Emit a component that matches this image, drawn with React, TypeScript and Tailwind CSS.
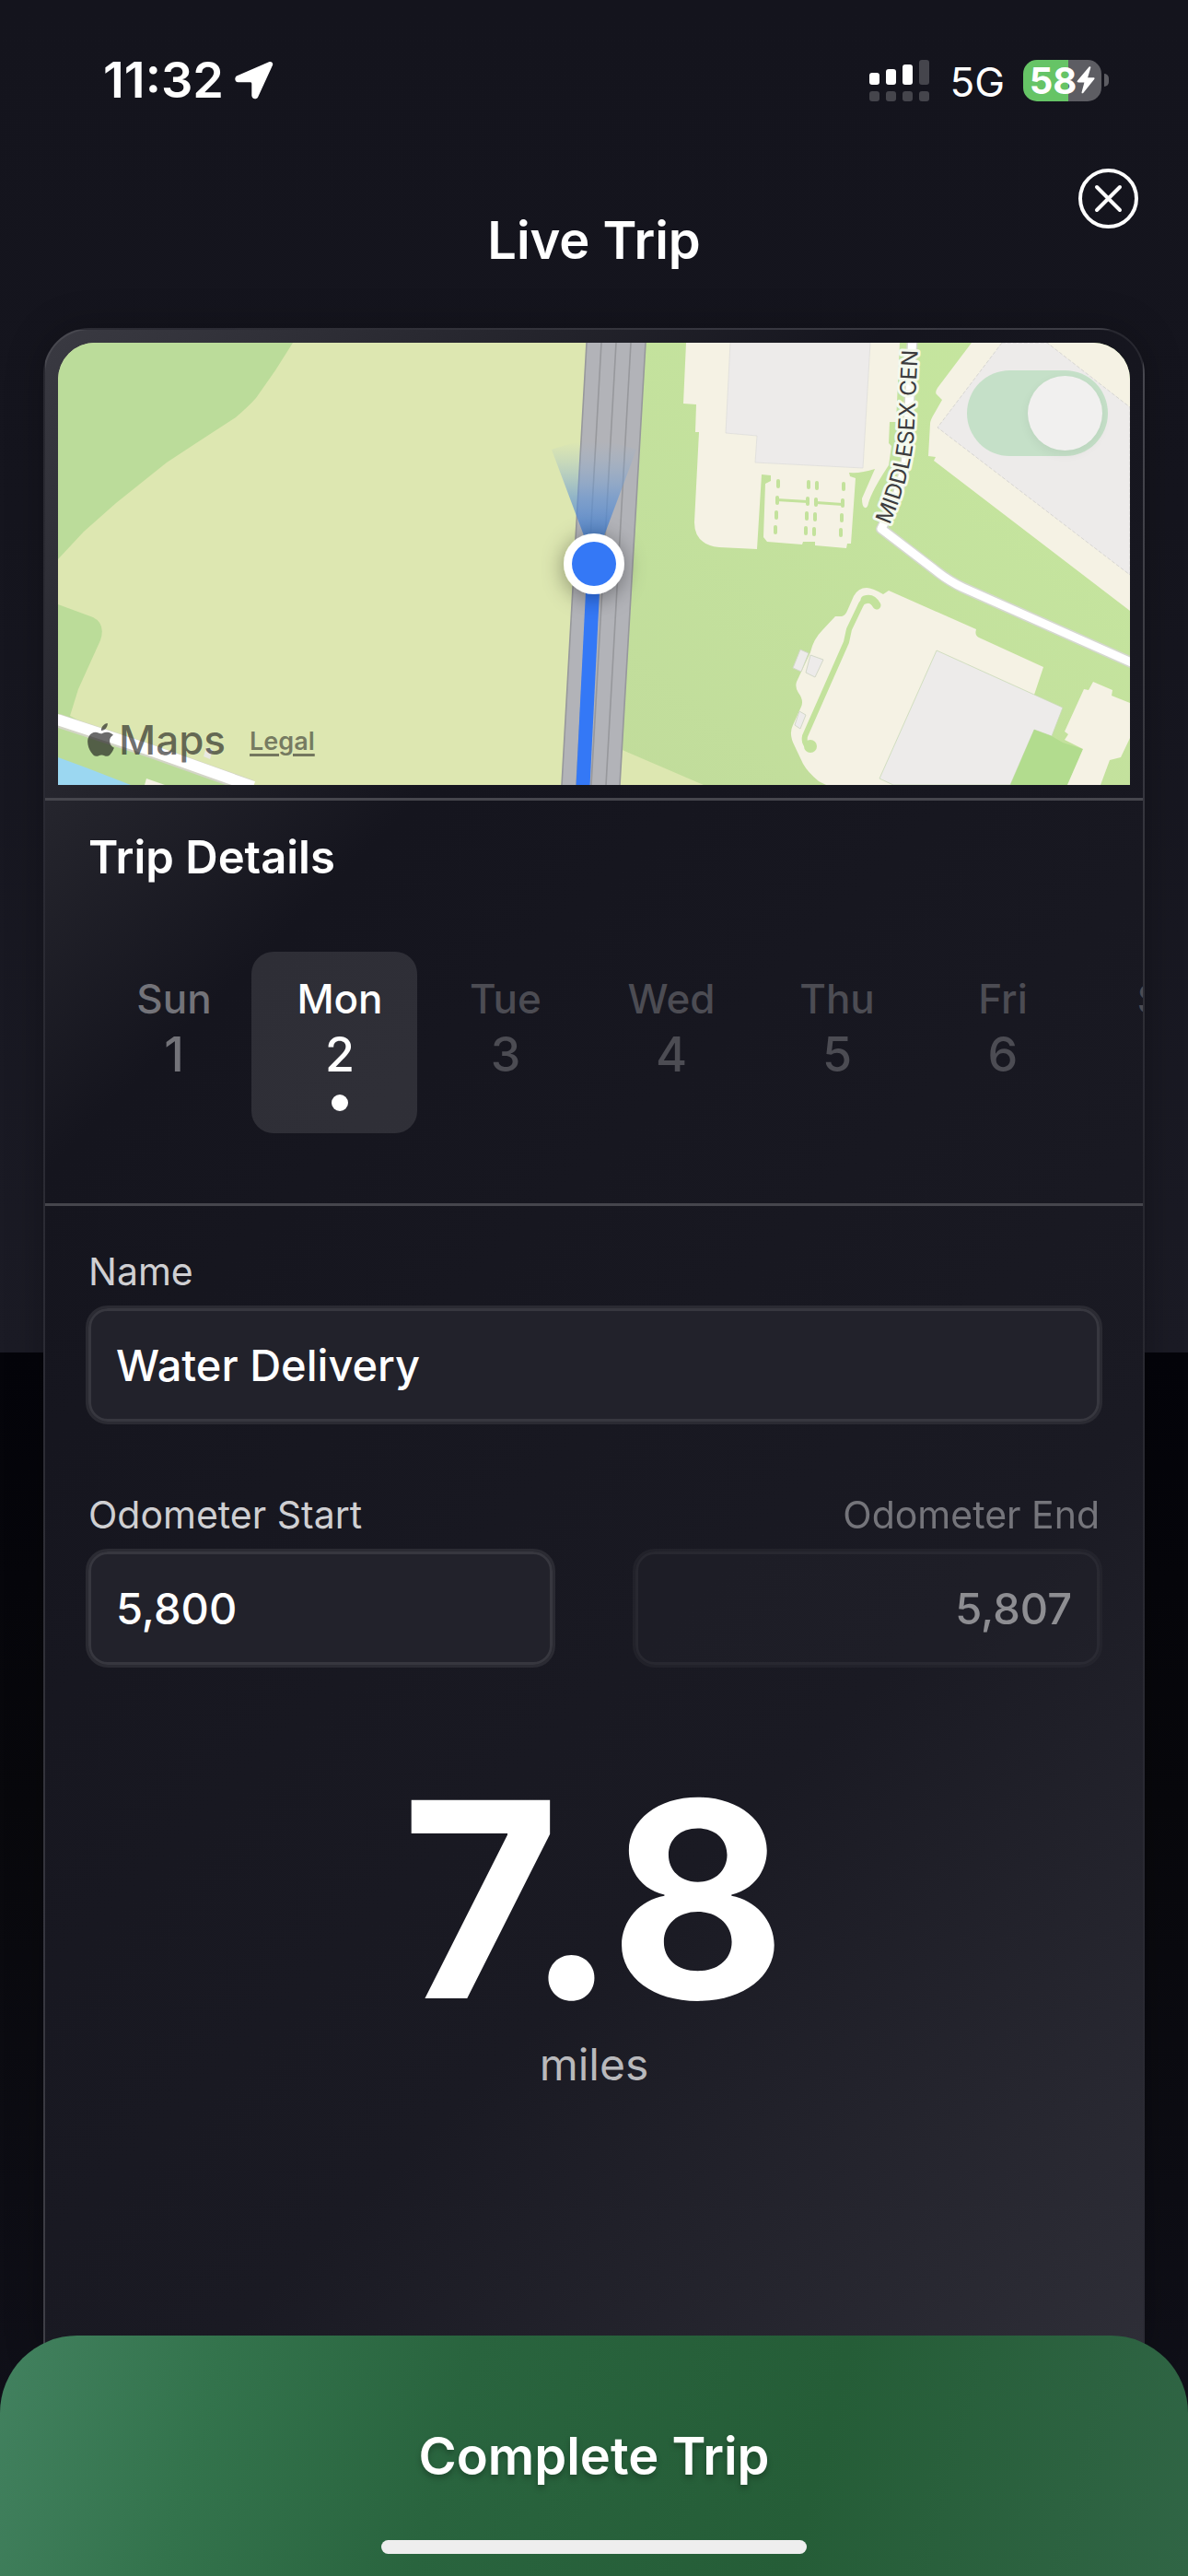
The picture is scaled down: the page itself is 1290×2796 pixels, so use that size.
import { useState } from 'react';
import clsx from 'clsx';

const days = [
  { name: 'Sun', date: 1, past: true },
  { name: 'Mon', date: 2, past: false },
  { name: 'Tue', date: 3, past: false },
  { name: 'Wed', date: 4, past: false },
  { name: 'Thu', date: 5, past: false },
  { name: 'Fri', date: 6, past: false },
  { name: 'Sat', date: 7, past: false }
];

// rows of planted islands in the parking lot
const parkingRows = [153, 171, 187, 203];
const parkingCols = [780, 813, 822, 851];

const signalBars = [
  { height: 'h-[13px]', on: true },
  { height: 'h-[17px]', on: true },
  { height: 'h-[22px]', on: true },
  { height: 'h-[27px]', on: false }
];

function StatusBar() {
  return (
    <div className="flex items-center justify-between pt-[60px] pr-[86px] pl-[112px]">
      <div className="flex items-center gap-3">
        <span className="text-[54px] leading-[54px] font-semibold">11:32</span>
        <svg viewBox="0 0 42 42" className="size-[42px]" fill="currentColor">
          <path d="M37 1.200 2.400 16.200C-.9 17.700-.2 23.200 3.600 23.200H16.600C17.800 23.200 18.300 23.800 18.300 24.800V37.600C18.300 41.800 23.600 42.600 25.200 39.200L41 4.800C42 2.200 39.600.1 37 1.200Z" />
        </svg>
      </div>

      <div className="flex items-center">
        <div className="flex items-end gap-[7px]">
          {signalBars.map(bar => (
            <div key={bar.height} className="flex flex-col gap-[7px]">
              <span
                className={clsx(
                  'w-[11px] rounded-[3px]',
                  bar.height,
                  bar.on ? 'bg-white' : 'bg-[#45454c]'
                )}
              />
              <span className="size-[11px] rounded-[3px] bg-[#45454c]" />
            </div>
          ))}
        </div>
        <span className="ml-[22px] pt-1 text-[44px] leading-[50px]">5G</span>
        <div className="ml-5 flex h-[45px] w-[85px] items-center justify-center overflow-hidden rounded-[15px] bg-linear-to-r from-[#66c466] from-58% to-[#5d5d63] to-58%">
          <span className="text-[40px] leading-[45px] font-bold">58</span>
          <svg viewBox="0 0 20 30" className="h-[30px] w-[20px]" fill="white">
            <path d="M13.6.6 1 15.6c-.8.9-.3 1.800.8 1.800h6.600L5.600 28.100c-.3 1.200.8 1.700 1.600.8L19.200 14c.8-1 .3-1.800-.8-1.800h-6.300L15.300 1.400C15.600.2 14.400-.3 13.600.6Z" />
          </svg>
        </div>
        <span className="ml-[3px] h-[14px] w-[5px] rounded-r-full bg-[#5d5d63]" />
      </div>
    </div>
  );
}

function MapView() {
  const [follow, setFollow] = useState(true);

  return (
    <div className="relative overflow-hidden rounded-t-[40px]">
      <svg viewBox="0 0 1164 480" className="block w-full">
        <defs>
          <linearGradient id="heading" x1="0" y1="1" x2="0" y2="0">
            <stop offset="0" stopColor="#3f78c8" />
            <stop offset="0.5" stopColor="#5f93d6" stopOpacity="0.6" />
            <stop offset="1" stopColor="#8fb4dc" stopOpacity="0" />
          </linearGradient>
          <linearGradient id="park" x1="0" y1="1" x2="1" y2="0">
            <stop offset="0" stopColor="#c1dc9b" />
            <stop offset="1" stopColor="#c6e79f" />
          </linearGradient>
          <filter id="dotShadow" x="-60%" y="-60%" width="220%" height="220%">
            <feDropShadow dx="0" dy="4" stdDeviation="12" floodOpacity="0.4" />
          </filter>
        </defs>

        {/* ground */}
        <rect width="600" height="480" fill="#dde7b1" />
        <rect x="600" width="564" height="480" fill="url(#park)" />
        <path d="M0 0H255L236 30 215 60Q207 69 193 81L153 107 118 130 63 174 28 205 0 235Z" fill="#bbdc9a" />
        <path d="M0 284 38 298Q52 305 46 323L22 376 13 405 30 414 193 480H0Z" fill="#bbdc99" />
        <path d="M0 450 30 461 79 480H0Z" fill="#9bd7f1" />
        <path d="M96 473 116 480H94Z" fill="#f5f2e4" />
        <path d="M0 410 100 443 210 482" stroke="#d3d5c6" strokeWidth="15" fill="none" />
        <path d="M-4 408 100 442 212 482" stroke="#fff" strokeWidth="12" fill="none" />
        <path d="M161 439 168 442 165 452 158 449Z" fill="#e9e8e2" />
        <path d="M608 440 701 480H606Z" fill="#dde7b1" />

        {/* highway */}
        <path d="M574 0H638L610 480H547Z" fill="#b2b3b8" />
        <path
          d="M574 0 547 480M590 0 563 480M606 0 579 480M622 0 595 480M638 0 610 480"
          stroke="#97989c"
          strokeWidth="1.600"
        />

        {/* north lot */}
        <path
          d="M682 0 679 66 693 67 692 97 696 97 691 195Q691 219 718 222L759 224 764 143 774 144 774 150 768 153 766 211 770 216 808 219 809 216 822 216 822 220 856 223 857 218 861 218 866 147 860 145 859 141 Q872 142 887 137L873 169Q873 178 876 179 879 180 880 174 884 160 902 133L905 112 902 109 903 86 910 86 914 0Z"
          fill="#f5f2e4"
        />
        <path d="M730 0 725 98 759 101 757 130 874 136 882 0Z" fill="#edebea" stroke="#d9d8d6" strokeWidth="0.600" />
        <g fill="#c3e29c">
          {parkingRows.map((y, row) =>
            parkingCols.map((x, col) => (
              <rect key={`${x}-${y}`} x={x - row} y={y - 5 + col} width="4" height="10" rx="2" />
            ))
          )}
          <path d="M780 169 814 171V174L780 172ZM823 172 852 174V177L823 175Z" />
        </g>

        {/* east lot */}
        <path
          d="M992 0 955 49Q952 54 954 56L960 62 952 76Q947 84 947 88L945 123 953 124 951 128 1164 291V0Z"
          fill="#f5f2e4"
        />
        <path d="M1025 0 955 92 1164 252V70L1074 0Z" fill="#edebea" stroke="#d0cfcd" strokeWidth="0.800" strokeDasharray="4 2" />

        {/* south lot */}
        <path
          d="M902 269 997 311Q995 318 1000 320L1070 352 1060 382 1040 480H834L826 476Q814 466 809 457L800 438Q793 425 798 415L807 395Q810 388 804 380 800 374 802 368L817 336Q820 322 830 312L844 297H851Q855 296 857 291L864 275Q869 266 878 266 884 266 896 273Z"
          fill="#f5f2e4"
        />
        <path
          d="M888 285Q883 278 877 279 873 281 871 286L859 311 856 325 811 427Q809 438 819 439"
          stroke="#c3e29c"
          strokeWidth="6"
          strokeLinecap="round"
          strokeLinejoin="round"
          fill="none"
        />
        <path d="M876 279Q884 276 889 285" stroke="#c3e29c" strokeWidth="9" strokeLinecap="round" fill="none" />
        <circle cx="817" cy="438" r="7" fill="#c3e29c" />
        <path d="M954 334 1091 396 1079 427 1060 420 1034 480H907L892 473Z" fill="#edebea" stroke="#c9d9b6" strokeWidth="0.800" />
        <path d="M1060 420 1079 427 1091 434 1113 441 1096 480H1034Z" fill="#b2dc8e" />
        <path
          d="M1124 368 1145 377 1144 383 1164 391V429L1154 450 1142 453 1132 480H1096L1113 441 1093 431 1097 425 1093 422 1114 376 1119 377Z"
          fill="#f5f2e4"
        />
        <path
          d="M806 333 815 337 807 357 798 353ZM817 339 831 344 822 363 812 358ZM805 400 812 404 806 419 800 415Z"
          fill="#edebea"
          stroke="#d3d8c8"
          strokeWidth="1"
        />

        {/* Middlesex Center road */}
        <g fill="none" strokeLinecap="round" strokeLinejoin="round">
          <path d="M928-10 922 116Q920 140 909 171L894 202 954 248Q968 259 983 266L1170 349" stroke="#d5d8cf" strokeWidth="12" />
          <path d="M928-10 922 116Q920 140 909 171L894 202 954 248Q968 259 983 266L1170 349" stroke="#fff" strokeWidth="9" />
        </g>
        <path id="streetLine" d="M903 198C916 168 926 135 929 105L937-60" fill="none" />
        <text
          className="font-['Inter',sans-serif] text-[24px]"
          fill="#3c3c3e"
          stroke="#f4f9ee"
          strokeWidth="6"
          strokeLinejoin="round"
          paintOrder="stroke"
        >
          <textPath href="#streetLine">MIDDLESEX CEN</textPath>
        </text>

        {/* current route and position */}
        <path d="M582 240 570 482" stroke="#3478f6" strokeWidth="15" />
        <path d="M578 228 536 116Q582 98 628 116L586 228Z" fill="url(#heading)" />
        <circle cx="582" cy="240" r="33" fill="#fff" filter="url(#dotShadow)" />
        <circle cx="582" cy="240" r="24" fill="#3478f6" />
      </svg>

      <label className="absolute top-[30px] right-6 block">
        <input
          type="checkbox"
          role="switch"
          aria-label="Follow position"
          checked={follow}
          onChange={e => setFollow(e.target.checked)}
          className="peer sr-only"
        />
        <span className="flex h-[93px] w-[153px] rounded-full bg-[#dddddd] p-1.5 peer-checked:justify-end peer-checked:bg-[#c5e0c8]">
          <span className="size-[81px] rounded-full bg-[#f1f0ef] shadow-[0_4px_12px_rgba(0,0,0,0.06)]" />
        </span>
      </label>

      <div className="absolute bottom-[22px] left-8 flex items-center text-[#1c1c1c]/65">
        <svg viewBox="0 0 30 37" className="h-[37px] w-[30px]" fill="currentColor">
          <path d="M21.800 0c.2 2-.6 4-1.800 5.500-1.200 1.500-3.200 2.600-5.100 2.500-.2-2 .7-4 1.900-5.300C18 1.200 20.100.1 21.800 0Z" />
          <path d="M28 12.700c-.2.100-4 2.300-3.900 6.700 0 5.300 4.700 7.100 4.800 7.100 0 .1-.7 2.500-2.400 5-1.500 2.100-3 4.300-5.400 4.300-2.300 0-3.100-1.400-5.800-1.400s-3.500 1.400-5.700 1.400c-2.400.1-4.200-2.300-5.700-4.400C.8 27.100-1.500 19.500 1.600 14.200 3.100 11.500 5.800 9.800 8.700 9.800c2.300 0 4.400 1.500 5.800 1.500s4-1.900 6.700-1.600c1.100 0 4.300.5 6.800 3Z" />
        </svg>
        <span className="ml-1 text-[44px] leading-[54px] font-medium">Maps</span>
        <a href="#legal" className="ml-[26px] pt-1 text-[27px] leading-[36px] font-semibold text-[#1c1c1c]/55 underline decoration-3 underline-offset-4">
          Legal
        </a>
      </div>
    </div>
  );
}

function DayPicker() {
  const [selected, setSelected] = useState(2);

  return (
    <div className="mt-[72px] flex overflow-hidden pl-11">
      {days.map(day => (
        <button
          key={day.date}
          type="button"
          onClick={() => setSelected(day.date)}
          className={clsx(
            'flex h-[197px] w-[180px] shrink-0 flex-col items-center rounded-[24px] pt-6 pl-3',
            day.date === selected
              ? 'bg-white/11 text-white'
              : day.past
                ? 'text-[#737379]'
                : 'text-[#4c4c53]'
          )}
        >
          <span className="text-[44px] leading-[54px] font-medium">{day.name}</span>
          <span className="mt-1 text-[52px] leading-[60px] font-medium">{day.date}</span>
          {day.date === selected && <span className="mt-[13px] size-[18px] rounded-full bg-white" />}
        </button>
      ))}
    </div>
  );
}

type FieldProps = {
  id: string;
  label: string;
  defaultValue: string;
  alignRight?: boolean;
  disabled?: boolean;
};

function Field({ id, label, defaultValue, alignRight, disabled }: FieldProps) {
  return (
    <div className={clsx('flex min-w-0 flex-1 flex-col', alignRight && 'text-right', disabled && 'opacity-50')}>
      <label htmlFor={id} className="px-[3px] text-[41px] leading-[54px] text-[#cfcfd2]">
        {label}
      </label>
      <input
        id={id}
        type="text"
        defaultValue={defaultValue}
        disabled={disabled}
        className={clsx(
          'mt-2.5 h-[129px] w-full rounded-[24px] border-3 border-[#2b2b33] bg-[#22222b] px-[30px] text-[47px] font-medium text-white inset-ring-3 inset-ring-[#37373f] outline-none',
          alignRight && 'text-right'
        )}
      />
    </div>
  );
}

export default function App() {
  return (
    <div className="flex min-h-screen flex-col bg-linear-[180deg,#14141d_0%,#15151e_20%,#1b1b25_52.5%,#04040a_52.5%,#08080c_70%,#12121c_100%] font-['Inter',sans-serif] text-white">
      <StatusBar />

      <header className="grid grid-cols-[1fr_auto_1fr] px-[54px] pt-[69px] pb-[59px]">
        <h1 className="col-start-2 mt-[42px] text-[56px] leading-[72px] font-semibold">Live Trip</h1>
        <button type="button" aria-label="Close" className="size-[65px] justify-self-end">
          <svg viewBox="0 0 65 65" fill="none" stroke="white" strokeWidth="4" strokeLinecap="round">
            <circle cx="32.500" cy="32.500" r="30.500" />
            <path d="m20 20 25 25m0-25L20 45" />
          </svg>
        </button>
      </header>

      <main className="mx-[47px] flex flex-1 flex-col rounded-t-[50px] border-2 border-b-0 border-white/8 bg-linear-[135deg,#3a3a42_0%,#24242c_16%,#15151e_27%,#1a1a23_70%,#2e2e37_100%] shadow-[0_0_40px_rgba(0,0,0,0.25)]">
        <div className="p-[14px]">
          <MapView />
        </div>

        <section className="border-y-3 border-[#46464d] pb-[76px]">
          <h2 className="mt-8 pl-[47px] text-[49px] leading-[60px] font-semibold">Trip Details</h2>
          <DayPicker />
        </section>

        <form className="flex flex-col gap-[71px] px-11 pt-[44px]">
          <Field id="name" label="Name" defaultValue="Water Delivery" />
          <div className="flex gap-[84px]">
            <Field id="odometer-start" label="Odometer Start" defaultValue="5,800" />
            <Field id="odometer-end" label="Odometer End" defaultValue="5,807" alignRight disabled />
          </div>
        </form>

        <div className="flex flex-col items-center pt-[101px]">
          <p className="text-[296px] leading-[300px] font-bold">7.8</p>
          <p className="text-[48px] leading-[60px] text-[#b9b9bc]">miles</p>
        </div>
      </main>

      <button
        type="button"
        className="relative -mt-5 flex h-[261px] flex-col items-center rounded-t-[84px] bg-linear-[105deg,#42815f_0%,#33734c_18%,#29643e_38%,#255d37_68%,#306545_100%] pt-[95px]"
      >
        <span className="text-[56px] leading-[72px] font-semibold text-shadow-[0_4px_6px_rgba(0,0,0,0.25)]">
          Complete Trip
        </span>
        <span className="mt-[55px] h-[15px] w-[462px] rounded-full bg-[#eeeeee]" />
      </button>
    </div>
  );
}
